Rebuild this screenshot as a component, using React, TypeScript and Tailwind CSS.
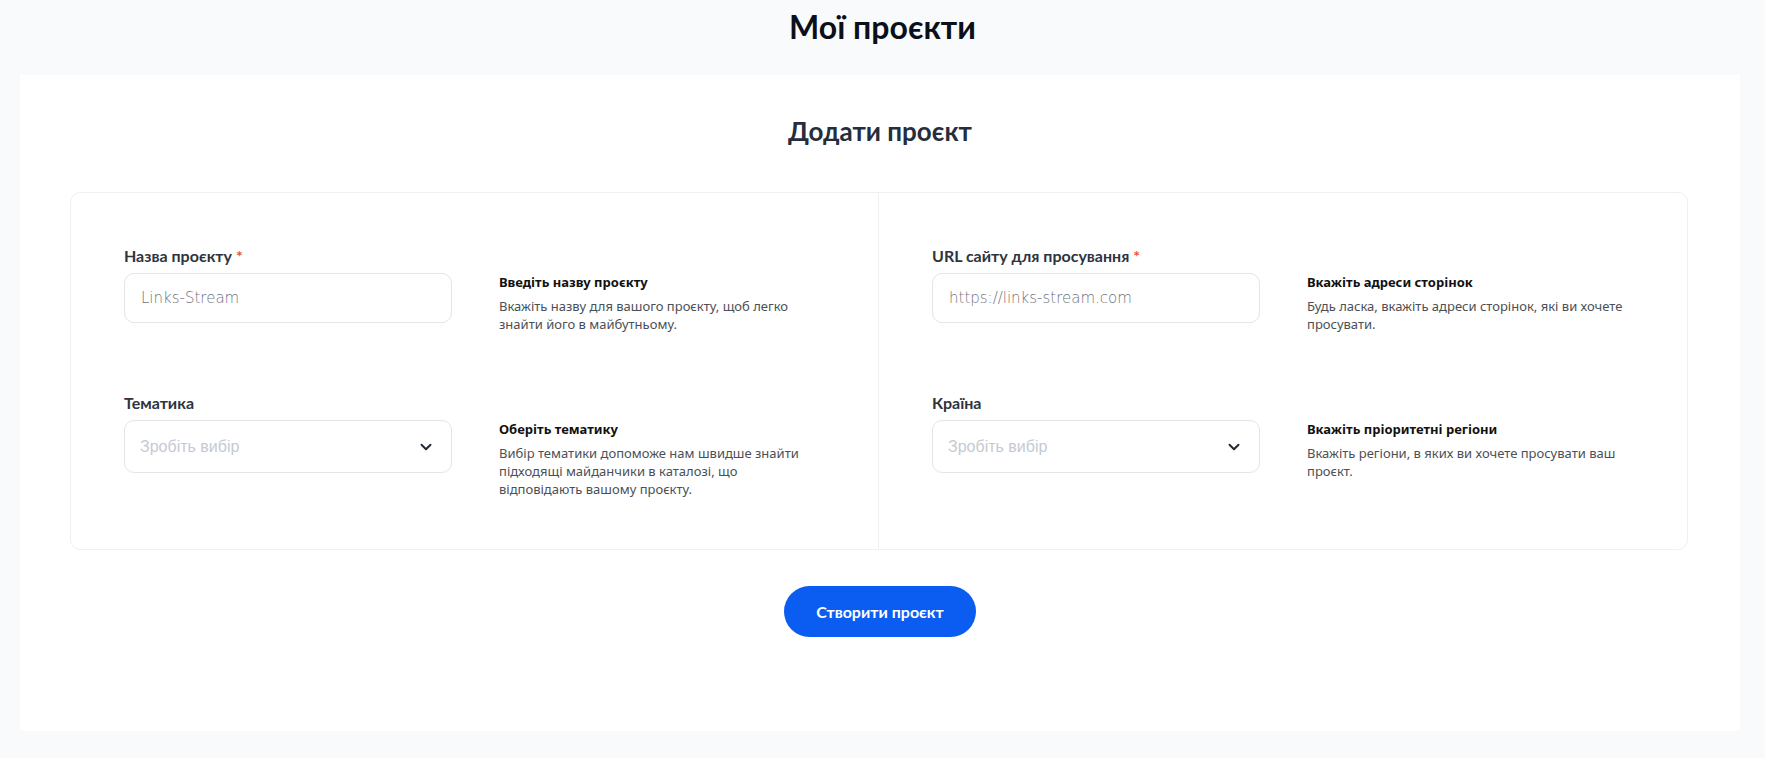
import { ChevronDown } from "lucide-react";

type Field = {
    label: string;
    required?: boolean;
    kind: "input" | "select";
    placeholder: string;
    helpTitle: string;
    helpText: string;
};

const leftFields: Field[] = [
    {
        label: "Назва проєкту",
        required: true,
        kind: "input",
        placeholder: "Links-Stream",
        helpTitle: "Введіть назву проєкту",
        helpText: "Вкажіть назву для вашого проєкту, щоб легко знайти його в майбутньому.",
    },
    {
        label: "Тематика",
        kind: "select",
        placeholder: "Зробіть вибір",
        helpTitle: "Оберіть тематику",
        helpText: "Вибір тематики допоможе нам швидше знайти підходящі майданчики в каталозі, що відповідають вашому проєкту.",
    },
];

const rightFields: Field[] = [
    {
        label: "URL сайту для просування",
        required: true,
        kind: "input",
        placeholder: "https://links-stream.com",
        helpTitle: "Вкажіть адреси сторінок",
        helpText: "Будь ласка, вкажіть адреси сторінок, які ви хочете просувати.",
    },
    {
        label: "Країна",
        kind: "select",
        placeholder: "Зробіть вибір",
        helpTitle: "Вкажіть пріоритетні регіони",
        helpText: "Вкажіть регіони, в яких ви хочете просувати ваш проєкт.",
    },
];

const FieldRow = ({ field }: { field: Field }) => {
    return (
        <div className="flex items-start">
            <div className="w-[328px] shrink-0">
                <label className="block text-[16px] leading-[20px] font-bold text-[#2d3440] font-['Lato','Noto_Sans',sans-serif]">
                    {field.label}
                    {field.required && <span className="ml-1 text-[#e5533d]">*</span>}
                </label>
                {field.kind === "input" ? (
                    <input
                        placeholder={field.placeholder}
                        className="mt-[7px] block w-full h-[50px] rounded-[10px] border border-[#e3e5e8] bg-white px-[16px] text-[15px] font-extralight text-[#374151] placeholder:text-[#70747c] outline-none font-['DejaVu_Sans','Noto_Sans',sans-serif]"
                    />
                ) : (
                    <div className="mt-[7px] flex items-center justify-between h-[53px] rounded-[10px] border border-[#e3e5e8] bg-white pl-[15px] pr-[16px]">
                        <span className="text-[16px] text-[#c5cad3] font-['Liberation_Sans',Arial,sans-serif]">{field.placeholder}</span>
                        <ChevronDown className="w-[18px] h-[18px] text-[#1f2937]" strokeWidth={2.6} />
                    </div>
                )}
            </div>
            <div className="ml-[47px] mt-[27px] w-[322px] font-['Noto_Sans','Open_Sans',sans-serif]">
                <p className="text-[13px] leading-[18px] font-bold text-[#111]">{field.helpTitle}</p>
                <p className="mt-[6px] text-[13px] leading-[18px] text-[#4b4f56]">{field.helpText}</p>
            </div>
        </div>
    );
};

const Column = ({ fields, divider }: { fields: Field[]; divider?: boolean }) => {
    return (
        <div className={`px-[53px] pt-[53px] pb-[51px] flex flex-col gap-[60px] ${divider ? "border-r border-[#eef0f2]" : ""}`}>
            {fields.map((f) => (
                <FieldRow key={f.label} field={f} />
            ))}
        </div>
    );
};

const App = () => {
    return (
        <div className="min-h-screen bg-[#f9fafc] pt-[9px] pb-[28px] font-['Lato','Noto_Sans',sans-serif]">
            <h1 className="text-center text-[32px] leading-[36px] font-bold text-[#0b0f19]">Мої проєкти</h1>

            <div className="ml-[20px] mr-[25px] mt-[30px] bg-white pt-[40px] pb-[94px]">
                <h2 className="text-center text-[26px] leading-[32px] font-bold text-[#262d3b]">Додати проєкт</h2>

                <div className="ml-[50px] mr-[52px] mt-[45px] grid grid-cols-2 rounded-[10px] border border-[#eef0f2]">
                    <Column fields={leftFields} divider />
                    <Column fields={rightFields} />
                </div>

                <div className="mt-[36px] flex justify-center">
                    <button className="w-[192px] h-[51px] rounded-full bg-[#0a5df0] text-white text-[16px] font-bold">
                        Створити проєкт
                    </button>
                </div>
            </div>
        </div>
    );
};

export default App;
